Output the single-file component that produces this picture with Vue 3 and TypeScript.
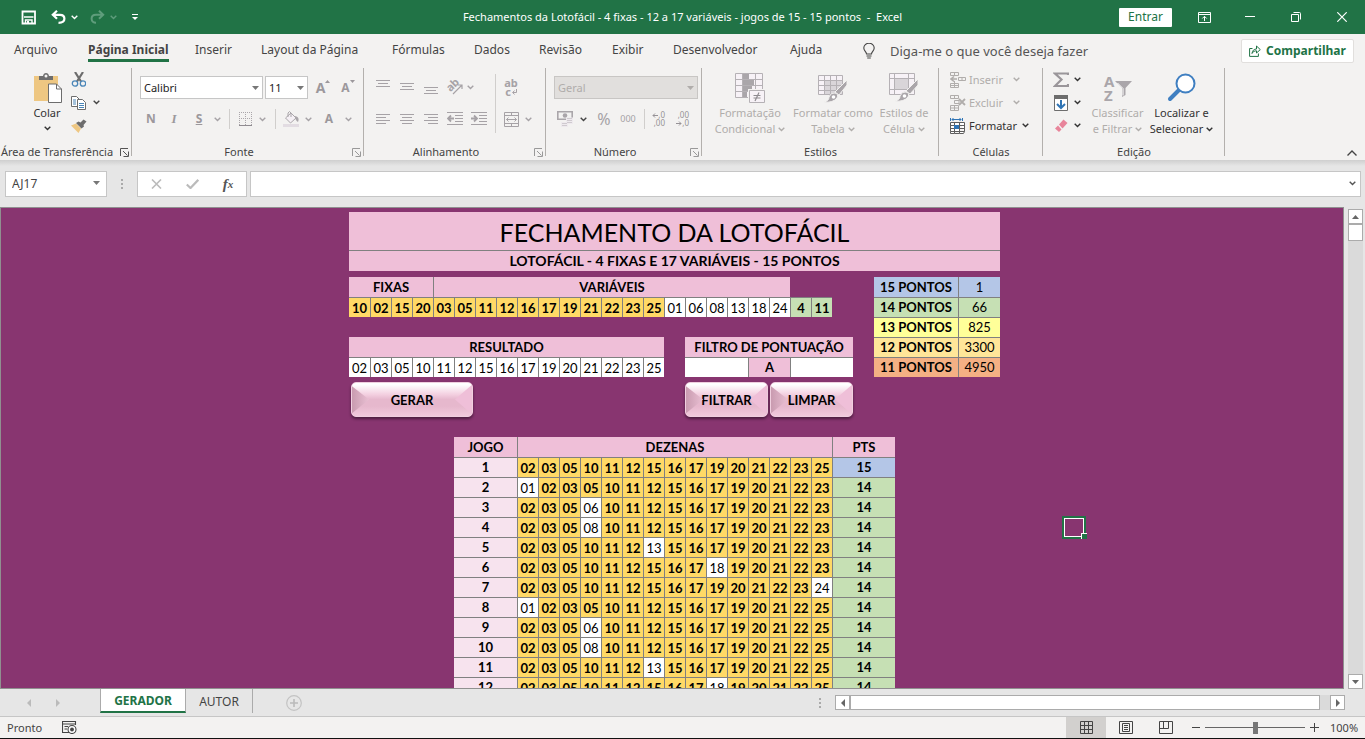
<script setup lang="ts">
import { ref, h, type FunctionalComponent } from 'vue'

const ribbonTabs = [
  'Arquivo',
  'Página Inicial',
  'Inserir',
  'Layout da Página',
  'Fórmulas',
  'Dados',
  'Revisão',
  'Exibir',
  'Desenvolvedor',
  'Ajuda',
]
const activeTab = ref('Página Inicial')

const fontName = ref('Calibri')
const fontSize = ref('11')
const numberFormat = ref('Geral')
const nameBox = ref('AJ17')
const formula = ref('')
const zoomLevel = ref(100)
const filterFrom = ref('')
const filterTo = ref('')

interface Dezena {
  n: string
  hit: boolean
}

const fixed = ['10', '02', '15', '20', '03', '05', '11', '12', '16', '17', '19', '21', '22', '23', '25']
const variable = ['01', '06', '08', '13', '18', '24']
const totals = ['4', '11']
const result = ['02', '03', '05', '10', '11', '12', '15', '16', '17', '19', '20', '21', '22', '23', '25']

const scores = [
  { label: '15 PONTOS', value: 1, tone: 'blue' },
  { label: '14 PONTOS', value: 66, tone: 'green' },
  { label: '13 PONTOS', value: 825, tone: 'yellow' },
  { label: '12 PONTOS', value: 3300, tone: 'amber' },
  { label: '11 PONTOS', value: 4950, tone: 'orange' },
]

// Each game swaps one drawn number for one of the losing variables.
function swap(removed: string, added: string): Dezena[] {
  return result
    .filter((n) => n !== removed)
    .concat(added)
    .sort()
    .map((n) => ({ n, hit: result.includes(n) }))
}

const games = [
  { dezenas: result.map((n): Dezena => ({ n, hit: true })), points: 15 },
  ...variable.map((v) => ({ dezenas: swap('25', v), points: 14 })),
  ...variable.map((v) => ({ dezenas: swap('23', v), points: 14 })),
]

const Chevron: FunctionalComponent = () =>
  h('svg', { width: 7, height: 5, viewBox: '0 0 7 5', class: 'chev', 'aria-hidden': 'true' }, [
    h('path', { d: 'M0.7 0.8L3.5 3.6L6.3 0.8', fill: 'none', stroke: 'currentColor', 'stroke-width': 1.4 }),
  ])

const Triangle: FunctionalComponent = () =>
  h('svg', { width: 7, height: 4, viewBox: '0 0 7 4', class: 'tri', 'aria-hidden': 'true' }, [
    h('path', { d: 'M0 0H7L3.5 4Z', fill: 'currentColor' }),
  ])

const Launcher: FunctionalComponent = () =>
  h('svg', { width: 9, height: 9, viewBox: '0 0 9 9', 'aria-hidden': 'true' }, [
    h('path', { d: 'M0.5 8V0.5H8M3 3L7.5 7.5M8.5 3.5V8.5H3.5', fill: 'none', stroke: 'currentColor' }),
  ])
</script>

<template>
  <div class="app">
    <header class="titlebar">
      <div class="quick">
        <button class="plain" aria-label="Salvar">
          <svg width="15" height="15" viewBox="0 0 15 15"><path d="M1.500 1.500H14V13.500H1.500Z" fill="none" stroke="#fff" stroke-width="1.800" /><path d="M3 7H12.500M4.500 13.500V10H11V13.500" fill="none" stroke="#fff" stroke-width="1.400" /><path d="M6 11H8V14H6Z" fill="#fff" /></svg>
        </button>
        <button class="plain" aria-label="Desfazer">
          <svg width="15" height="14" viewBox="0 0 15 14"><path d="M6 0.800L1.800 4.800L6 8.800M1.800 4.800H9C12 4.800 13.400 6.800 13.400 8.800C13.400 11.200 11.500 12.800 7.500 12.800" fill="none" stroke="#fff" stroke-width="2.200" /></svg>
        </button>
        <button class="plain" aria-label="Opções de desfazer"><Chevron /></button>
        <button class="plain faded" aria-label="Refazer" disabled>
          <svg width="15" height="14" viewBox="0 0 15 14"><path d="M9 0.800L13.200 4.800L9 8.800M13.200 4.800H6C3 4.800 1.600 6.800 1.600 8.800C1.600 11.200 3.500 12.800 6 12.800" fill="none" stroke="currentColor" stroke-width="2" /></svg>
        </button>
        <button class="plain faded" aria-label="Opções de refazer" disabled><Chevron /></button>
        <button class="plain" aria-label="Personalizar barra">
          <svg width="6" height="7" viewBox="0 0 6 7"><path d="M0 0.500H6" stroke="#fff" /><path d="M0 3H6L3 6Z" fill="#fff" /></svg>
        </button>
      </div>
      <h1 class="doc-title">Fechamentos da Lotofácil - 4 fixas - 12 a 17 variáveis - jogos de 15 - 15 pontos&nbsp; -&nbsp; Excel</h1>
      <div class="window-tools">
        <button class="signin">Entrar</button>
        <button class="win" aria-label="Opções de exibição da faixa">
          <svg width="13" height="11" viewBox="0 0 13 11"><path d="M0.500 0.500H12.500V10.500H0.500ZM0.500 2.500H12.500M6.500 9V4.500M4.300 6.500L6.500 4.300L8.700 6.500" fill="none" stroke="#fff" /></svg>
        </button>
        <button class="win" aria-label="Minimizar">
          <svg width="10" height="2" viewBox="0 0 10 2"><path d="M0 0.500H10" stroke="#fff" /></svg>
        </button>
        <button class="win" aria-label="Restaurar">
          <svg width="10" height="10" viewBox="0 0 10 10"><path d="M0.500 2.500H7.500V9.500H0.500ZM2.500 0.500H8.500Q9.500 0.500 9.500 1.500V7.500" fill="none" stroke="#fff" /></svg>
        </button>
        <button class="win" aria-label="Fechar">
          <svg width="10" height="10" viewBox="0 0 10 10"><path d="M0.300 0.300L9.700 9.700M9.700 0.300L0.300 9.700" stroke="#fff" stroke-width="1.200" /></svg>
        </button>
      </div>
    </header>

    <nav class="tabs" aria-label="Faixa de opções">
      <div class="tab-list">
        <button
          v-for="tab in ribbonTabs"
          :key="tab"
          class="tab"
          :class="{ active: tab === activeTab }"
          @click="activeTab = tab"
        >
          <span>{{ tab }}</span>
        </button>
      </div>
      <button class="tell-me">
        <svg width="12" height="16" viewBox="0 0 12 16"><path d="M3.500 11C3.500 8.500 0.800 8 0.800 5A5 4.600 0 0 1 11.200 5C11.200 8 8.500 8.500 8.500 11ZM3.500 13H8.500M4.200 15H7.800" fill="none" stroke="#444" stroke-width="1.100" /></svg>
        <span>Diga-me o que você deseja fazer</span>
      </button>
      <button class="share">
        <svg width="12" height="12" viewBox="0 0 12 12"><path d="M3.500 3.500H0.600V11.400H9.400V8.500M3 8.500C3.300 5.500 5 4 7.500 4V1L11.300 4.600L7.500 8V5.800C5.500 5.800 4 6.500 3 8.500Z" fill="none" stroke="#217346" /></svg>
        <span>Compartilhar</span>
      </button>
    </nav>

    <div class="ribbon">
      <section class="group g-clip">
        <div class="body clip-body">
          <button class="big on">
            <svg width="29" height="32" viewBox="0 0 29 32"><path d="M1 4H25V29H1Z" fill="#eec782" /><path d="M6 8V4H10Q10.500 1 13 1Q15.500 1 16 4H20V8Z" fill="#6d6d6d" /><circle cx="13" cy="4" r="1.500" fill="#f3f2f1" /><path d="M15.500 12H23.500L28.500 17V30.500H15.500Z" fill="#fff" stroke="#6d6d6d" /><path d="M23.500 12V17H28.500" fill="none" stroke="#6d6d6d" /></svg>
            <span>Colar</span>
            <Chevron />
          </button>
          <div class="stack">
            <button class="plain" aria-label="Recortar">
              <svg width="15" height="15" viewBox="0 0 15 15"><path d="M4 0L10 9.500M12 0L6 9.500" stroke="#6d6d6d" stroke-width="2.200" /><circle cx="4" cy="11.500" r="2.700" fill="none" stroke="#4a86b8" stroke-width="1.300" /><circle cx="12" cy="11.500" r="2.700" fill="none" stroke="#4a86b8" stroke-width="1.300" /></svg>
            </button>
            <div class="pair">
              <button class="plain" aria-label="Copiar">
                <svg width="15" height="14" viewBox="0 0 15 14"><path d="M0.500 0.500H5.500L8.500 3.500V10.500H0.500Z" fill="#fff" stroke="#6d6d6d" /><path d="M2 4H5M2 6H5M2 8H5" stroke="#4a86b8" /><path d="M6.500 3.500H11.500L14.500 6.500V13.500H6.500Z" fill="#fff" stroke="#6d6d6d" /><path d="M8 7.500H13M8 9.500H13M8 11.500H13" stroke="#4a86b8" /></svg>
              </button>
              <button class="plain" aria-label="Opções de cópia"><Chevron /></button>
            </div>
            <button class="plain" aria-label="Pincel de formatação">
              <svg width="16" height="14" viewBox="0 0 16 14"><path d="M0 6.500L5 4.500L10 9.500L7.500 14Z" fill="#eec782" /><path d="M5 4L7.500 2.500L9.500 3.500L12.500 0.500L15.500 2.500L12.500 6L13 7.500L10.500 9.500Z" fill="#6d6d6d" /></svg>
            </button>
          </div>
        </div>
        <footer><span>Área de Transferência</span><button class="plain dark" aria-label="Mais opções de área de transferência"><Launcher /></button></footer>
      </section>

      <section class="group g-font">
        <div class="body rows">
          <div class="row font-top">
            <label class="picker"><select v-model="fontName" aria-label="Fonte"><option>Calibri</option></select><Triangle /></label>
            <label class="picker"><select v-model="fontSize" aria-label="Tamanho da fonte"><option>11</option></select><Triangle /></label>
            <button class="plain glyph large" aria-label="Aumentar fonte">A<svg width="5" height="3" viewBox="0 0 5 3"><path d="M0 3L2.500 0L5 3Z" fill="currentColor" /></svg></button>
            <button class="plain glyph small" aria-label="Diminuir fonte">A<svg width="5" height="3" viewBox="0 0 5 3"><path d="M0 0L2.500 3L5 0Z" fill="currentColor" /></svg></button>
          </div>
          <div class="row font-bottom">
            <button class="plain glyph">N</button>
            <button class="plain glyph italic">I</button>
            <button class="plain glyph under">S</button>
            <button class="plain" aria-label="Opções de sublinhado"><Chevron /></button>
            <i class="rule"></i>
            <button class="plain" aria-label="Bordas">
              <svg width="13" height="14" viewBox="0 0 13 14"><path d="M0.500 0V13M6.500 0V13M12.500 0V13M0 0.500H13M0 6.500H13" stroke="#aaa6aa" stroke-dasharray="1 1" /><path d="M0 13.500H13" stroke="#8f8b90" /></svg>
            </button>
            <button class="plain" aria-label="Opções de bordas"><Chevron /></button>
            <i class="rule"></i>
            <button class="plain" aria-label="Cor de preenchimento">
              <svg width="16" height="16" viewBox="0 0 16 16"><path d="M2.500 7L8 2L13 7L7.500 12Z" fill="#f5f0f5" stroke="#aaa6aa" /><path d="M5 6V2Q6.500 -1 8 2V6" fill="none" stroke="#aaa6aa" /><path d="M12 5Q17 6 15 11Q12 9 12 5Z" fill="#aaa6aa" /><path d="M0 13H16V16H0Z" fill="#e2dce2" /></svg>
            </button>
            <button class="plain" aria-label="Opções de preenchimento"><Chevron /></button>
            <button class="plain glyph">A</button>
            <button class="plain" aria-label="Opções de cor da fonte"><Chevron /></button>
          </div>
        </div>
        <footer><span>Fonte</span><button class="plain" aria-label="Mais opções de fonte"><Launcher /></button></footer>
      </section>

      <section class="group g-align">
        <div class="body align-body">
          <div class="align-grid">
            <button class="plain" aria-label="Alinhar em cima"><svg width="14" height="14" viewBox="0 0 14 14"><path d="M0 0.500H14M2 3.500H12M0 6.500H14" stroke="currentColor" /></svg></button>
            <button class="plain" aria-label="Alinhar no meio"><svg width="14" height="14" viewBox="0 0 14 14"><path d="M0 3.500H14M2 6.500H12M0 9.500H14" stroke="currentColor" /></svg></button>
            <button class="plain" aria-label="Alinhar embaixo"><svg width="14" height="14" viewBox="0 0 14 14"><path d="M0 7.500H14M2 10.500H12M0 13.500H14" stroke="currentColor" /></svg></button>
            <button class="plain" aria-label="Orientação">
              <svg class="spill" width="16" height="16" viewBox="0 0 16 16"><g transform="rotate(-45 7 7)"><text x="0" y="9" font-size="11" font-weight="700" fill="currentColor">ab</text></g><path d="M6 15L15 6M11 6H15V10" fill="none" stroke="currentColor" stroke-width="1.200" /></svg>
            </button>
            <button class="plain start" aria-label="Opções de orientação"><Chevron /></button>
            <button class="plain" aria-label="Alinhar à esquerda"><svg width="14" height="12" viewBox="0 0 14 12"><path d="M0 1.500H14M0 4.500H10M0 7.500H14M0 10.500H10" stroke="currentColor" /></svg></button>
            <button class="plain" aria-label="Centralizar"><svg width="14" height="12" viewBox="0 0 14 12"><path d="M0 1.500H14M2 4.500H12M0 7.500H14M2 10.500H12" stroke="currentColor" /></svg></button>
            <button class="plain" aria-label="Alinhar à direita"><svg width="14" height="12" viewBox="0 0 14 12"><path d="M0 1.500H14M4 4.500H14M0 7.500H14M4 10.500H14" stroke="currentColor" /></svg></button>
            <button class="plain" aria-label="Diminuir recuo"><svg width="16" height="14" viewBox="0 0 16 14"><path d="M0 0.500H16M8 3.500H16M8 6.500H16M8 9.500H16M0 12.500H16" stroke="currentColor" /><path d="M1 6.500H7M4 3.500L1 6.500L4 9.500" fill="none" stroke="currentColor" stroke-width="1.800" /></svg></button>
            <button class="plain" aria-label="Aumentar recuo"><svg width="16" height="14" viewBox="0 0 16 14"><path d="M0 0.500H16M8 3.500H16M8 6.500H16M8 9.500H16M0 12.500H16" stroke="currentColor" /><path d="M0 6.500H6M3 3.500L6 6.500L3 9.500" fill="none" stroke="currentColor" stroke-width="1.800" /></svg></button>
          </div>
          <i class="rule tall"></i>
          <div class="wrap-grid">
            <button class="plain wrap-text" aria-label="Quebrar texto automaticamente"><span>ab</span><span>c<svg width="5" height="6" viewBox="0 0 5 6"><path d="M4.500 0V3.500H0.800M2.500 1.500L0.700 3.500L2.500 5.500" fill="none" stroke="currentColor" /></svg></span></button>
            <span></span>
            <button class="plain" aria-label="Mesclar e centralizar"><svg width="15" height="15" viewBox="0 0 15 15"><path d="M0.500 0.500H14.500V14.500H0.500ZM0.500 3.500H14.500M0.500 11.500H14.500M7.500 0.500V3.500M7.500 11.500V14.500M2.500 7.500H12.500M4.500 5.500L2.500 7.500L4.500 9.500M10.500 5.500L12.500 7.500L10.500 9.500" fill="none" stroke="currentColor" /></svg></button>
            <button class="plain" aria-label="Opções de mesclagem"><Chevron /></button>
          </div>
        </div>
        <footer><span>Alinhamento</span><button class="plain" aria-label="Mais opções de alinhamento"><Launcher /></button></footer>
      </section>

      <section class="group g-number">
        <div class="body rows">
          <div class="row">
            <label class="picker off"><select v-model="numberFormat" aria-label="Formato de número" disabled><option>Geral</option></select><Triangle /></label>
          </div>
          <div class="row number-bottom">
            <button class="plain" aria-label="Formato de contabilização">
              <svg width="16" height="16" viewBox="0 0 16 16"><path d="M0.800 0.800H15.200V8.200H0.800Z" fill="#f3f2f1" stroke="#aaa6aa" stroke-width="1.600" /><circle cx="8" cy="4.500" r="2.300" fill="#aaa6aa" /><path d="M9 6.500H16V13H11V16H4V11H9Z" fill="#eeeaee" /><path d="M10 7.500H15M10 9.500H15M10 11.500H15M5 12.500H10M5 14.500H10" stroke="#cfcacf" /></svg>
            </button>
            <button class="plain dark" aria-label="Opções de moeda"><Chevron /></button>
            <button class="plain percent">%</button>
            <button class="plain thousands">000</button>
            <i class="rule"></i>
            <button class="plain decimals" aria-label="Aumentar casas decimais"><span><svg width="6" height="5" viewBox="0 0 6 5"><path d="M6 2.500H1M3 0.500L1 2.500L3 4.500" fill="none" stroke="currentColor" /></svg>,0</span><span>,00</span></button>
            <button class="plain decimals" aria-label="Diminuir casas decimais"><span>,00</span><span><svg width="6" height="5" viewBox="0 0 6 5"><path d="M0 2.500H5M3 0.500L5 2.500L3 4.500" fill="none" stroke="currentColor" /></svg>,0</span></button>
          </div>
        </div>
        <footer><span>Número</span><button class="plain" aria-label="Mais opções de número"><Launcher /></button></footer>
      </section>

      <section class="group g-styles">
        <div class="body style-body">
          <button class="big" disabled>
            <svg width="30" height="30" viewBox="0 0 30 30"><path d="M0.500 0.500H27.500V24.500H0.500Z" fill="#f7f2f7" stroke="#b5b1b5" /><path d="M7.500 0V25M20.500 0V25M0 6.500H28M0 12.500H28M0 18.500H28" stroke="#b5b1b5" /><path d="M8 1H14V6H8ZM8 7H19V12H8ZM8 13H17V18H8ZM8 19H12V24H8Z" fill="#aaa6aa" /><path d="M13 16H30V30H13Z" fill="#f3f2f1" /><path d="M14.500 17.500H29.500V29.500H14.500Z" fill="#f7f2f7" stroke="#b5b1b5" /><path d="M18.500 22.500H25.500M18.500 25H25.500M24 19.500L20 28" stroke="#8f8b90" stroke-width="1.200" /></svg>
            <span>Formatação</span>
            <span>Condicional <Chevron /></span>
          </button>
          <button class="big" disabled>
            <svg width="30" height="30" viewBox="0 0 30 30"><path d="M0.500 2.500H24.500V21.500H0.500Z" fill="#f7f2f7" stroke="#b5b1b5" /><path d="M7 8H24V21H7Z" fill="#d9d5d9" /><path d="M6.500 2V22M12.500 2V22M18.500 2V22M0 7.500H25M0 12.500H25M0 17.500H25" stroke="#b5b1b5" /><path d="M29 7V12L21 22L17 19Z" fill="#aaa6aa" stroke="#f3f2f1" /><path d="M17 20Q21 21 19 25Q15 30 6 29Q11 28 11 24Q13 19 17 20Z" fill="#aaa6aa" stroke="#f3f2f1" /><circle cx="15.500" cy="24" r="1.800" fill="#fff" /></svg>
            <span>Formatar como</span>
            <span>Tabela <Chevron /></span>
          </button>
          <button class="big" disabled>
            <svg width="30" height="30" viewBox="0 0 30 30"><path d="M0.500 0.500H25.500V21.500H0.500Z" fill="#f7f2f7" stroke="#b5b1b5" /><path d="M5.500 0V22M0 5.500H26M19.500 0V22M0 16.500H26" stroke="#b5b1b5" /><path d="M6 6H19V16H6Z" fill="#d9d5d9" /><path d="M29 6V12L21 21L17 18Z" fill="#aaa6aa" stroke="#f3f2f1" /><path d="M17 19Q21 20 19 24Q15 29 6 28Q11 27 11 23Q13 18 17 19Z" fill="#aaa6aa" stroke="#f3f2f1" /><circle cx="15.500" cy="23" r="1.800" fill="#fff" /></svg>
            <span>Estilos de</span>
            <span>Célula <Chevron /></span>
          </button>
        </div>
        <footer class="full"><span>Estilos</span></footer>
      </section>

      <section class="group g-cells">
        <div class="body cell-body">
          <button class="line" disabled>
            <svg width="16" height="16" viewBox="0 0 16 16"><path d="M0.500 0.500H8.500V3.500H0.500ZM4.500 0.500V3.500M0.500 11.500H8.500V15.500H0.500ZM4.500 9V15.500M0.500 13.500H8.500M8.500 5.500H15.500V8.500H8.500ZM12 5.500V8.500" fill="none" stroke="currentColor" /><path d="M0.500 7H7M4 4.500L1 7L4 9.500" fill="none" stroke="currentColor" stroke-width="1.600" /></svg>
            <span>Inserir</span><Chevron />
          </button>
          <button class="line" disabled>
            <svg width="16" height="16" viewBox="0 0 16 16"><path d="M0.500 0.500H8.500V3.500H0.500ZM4.500 0.500V3.500M4.500 5.500H9V8.500H4.500ZM0.500 10.500H8.500V15.500H0.500ZM4.500 10.500V15.500M0.500 13H8.500" fill="none" stroke="currentColor" /><path d="M9 4L15 10M15 4L9 10" stroke="currentColor" stroke-width="1.800" /></svg>
            <span>Excluir</span><Chevron />
          </button>
          <button class="line on">
            <svg width="16" height="16" viewBox="0 0 16 16"><path d="M0.500 4.500H14.500V13.500H0.500ZM0.500 7.500H14.500M0.500 10.500H14.500M4.500 4.500V15.500H0.500V13.500M9.500 4.500V15.500H13.500L14.500 13.500M4.500 15.500H9.500" fill="#fff" stroke="#5e5e5e" /><path d="M4 7H9V11H4Z" fill="#2f74b5" /><path d="M0.500 0V3M12.500 0V3M2 1.500H11M3.500 0L2 1.500L3.500 3M9.500 0L11 1.500L9.500 3" fill="none" stroke="#2f74b5" /></svg>
            <span>Formatar</span><Chevron />
          </button>
        </div>
        <footer class="full"><span>Células</span></footer>
      </section>

      <section class="group g-edit">
        <div class="body edit-body">
          <div class="edit-stack">
            <button class="line on" aria-label="AutoSoma"><svg width="16" height="16" viewBox="0 0 16 16"><path d="M15 3V1.500H2L8.500 7.500L2 14H15V12" fill="none" stroke="#9a969a" stroke-width="2.200" /></svg><Chevron /></button>
            <button class="line on" aria-label="Preencher"><svg width="16" height="16" viewBox="0 0 16 16"><path d="M1.500 0.500H14.500V15.500H1.500Z" fill="#fff" stroke="#6d6d6d" /><path d="M1 0H15V4H1Z" fill="#6d6d6d" /><path d="M8 5V13M4 9L8 13L12 9" fill="none" stroke="#2f74b5" stroke-width="2" /></svg><Chevron /></button>
            <button class="line on" aria-label="Limpar"><svg width="16" height="16" viewBox="0 0 16 16"><path d="M6 6.500L10.500 1.500L14.500 5L9.500 10.500Z" fill="#e8849a" /><path d="M5 7.500L8.500 11.500L6 14L2 10.500Z" fill="#e8849a" /></svg><Chevron /></button>
          </div>
          <button class="big" disabled>
            <svg width="30" height="30" viewBox="0 0 30 30"><text x="1" y="14" font-size="15" font-weight="700" fill="#aaa6aa">A</text><text x="1" y="28" font-size="15" font-weight="700" fill="#aaa6aa">Z</text><path d="M12 8H29L22.500 15V22L19 24V15Z" fill="#aaa6aa" /><path d="M14.500 10L20 15.500V22.500" fill="none" stroke="#fff" /></svg>
            <span>Classificar</span>
            <span>e Filtrar <Chevron /></span>
          </button>
          <button class="big on">
            <svg width="30" height="30" viewBox="0 0 30 30"><path d="M12 17L3 26" stroke="#3f7fc1" stroke-width="4" stroke-linecap="round" /><circle cx="18.500" cy="10.500" r="9" fill="#fff" stroke="#3f7fc1" stroke-width="2" /></svg>
            <span>Localizar e</span>
            <span>Selecionar <Chevron /></span>
          </button>
        </div>
        <footer class="full"><span>Edição</span></footer>
      </section>

      <button class="plain collapse" aria-label="Recolher a faixa de opções">
        <svg width="10" height="6" viewBox="0 0 10 6"><path d="M0.500 5.500L5 1L9.500 5.500" fill="none" stroke="#444" stroke-width="1.400" /></svg>
      </button>
    </div>

    <div class="formula-bar">
      <label class="name-box"><input v-model="nameBox" aria-label="Caixa de nome" /><Triangle /></label>
      <i class="dots"></i>
      <div class="fx-box">
        <button class="plain" aria-label="Cancelar"><svg width="11" height="10" viewBox="0 0 11 10"><path d="M1 0.500L10 9.500M10 0.500L1 9.500" stroke="#bbb" stroke-width="1.600" /></svg></button>
        <button class="plain" aria-label="Inserir"><svg width="13" height="10" viewBox="0 0 13 10"><path d="M0.800 5.500L4.500 9L12.300 0.800" fill="none" stroke="#bbb" stroke-width="2.200" /></svg></button>
        <button class="plain fx" aria-label="Inserir função">f<sub>x</sub></button>
      </div>
      <label class="formula-input"><input v-model="formula" aria-label="Barra de fórmulas" /><Chevron /></label>
    </div>

    <div class="workspace">
      <main class="sheet">
        <div class="content">
          <header class="banner">
            <h2>FECHAMENTO DA LOTOFÁCIL</h2>
            <p>LOTOFÁCIL - 4 FIXAS E 17 VARIÁVEIS - 15 PONTOS</p>
          </header>

          <div class="panels">
            <table class="cells numbers">
              <colgroup><col v-for="i in 23" :key="i" /></colgroup>
              <thead><tr><th colspan="4">FIXAS</th><th colspan="17">VARIÁVEIS</th><td colspan="2" class="empty"></td></tr></thead>
              <tbody>
                <tr>
                  <td v-for="n in fixed" :key="n" class="low gold">{{ n }}</td>
                  <td v-for="n in variable" :key="n" class="low white">{{ n }}</td>
                  <td v-for="n in totals" :key="'t' + n" class="low green bold">{{ n }}</td>
                </tr>
              </tbody>
            </table>

            <table class="cells scores">
              <tbody>
                <tr v-for="s in scores" :key="s.label" :class="s.tone"><th>{{ s.label }}</th><td>{{ s.value }}</td></tr>
              </tbody>
            </table>

            <table class="cells result">
              <colgroup><col v-for="i in 15" :key="i" /></colgroup>
              <thead><tr><th colspan="15">RESULTADO</th></tr></thead>
              <tbody><tr><td v-for="n in result" :key="n" class="low white">{{ n }}</td></tr></tbody>
            </table>

            <table class="cells filter">
              <colgroup><col class="side" /><col /><col class="side" /></colgroup>
              <thead><tr><th colspan="3">FILTRO DE PONTUAÇÃO</th></tr></thead>
              <tbody>
                <tr>
                  <td class="white"><input v-model="filterFrom" aria-label="Pontuação mínima" /></td>
                  <th>A</th>
                  <td class="white"><input v-model="filterTo" aria-label="Pontuação máxima" /></td>
                </tr>
              </tbody>
            </table>

            <div class="actions first"><button class="bevel wide"><span>GERAR</span></button></div>
            <div class="actions second"><button class="bevel"><span>FILTRAR</span></button><button class="bevel"><span>LIMPAR</span></button></div>
          </div>

          <table class="cells games">
            <colgroup><col class="edge" /><col v-for="i in 15" :key="i" /><col class="edge" /></colgroup>
            <thead><tr><th>JOGO</th><th colspan="15">DEZENAS</th><th>PTS</th></tr></thead>
            <tbody>
              <tr v-for="(g, i) in games" :key="i">
                <th class="pale">{{ i + 1 }}</th>
                <td v-for="d in g.dezenas" :key="d.n" class="low" :class="d.hit ? 'gold' : 'white'">{{ d.n }}</td>
                <td class="bold" :class="g.points === 15 ? 'blue' : 'green'">{{ g.points }}</td>
              </tr>
            </tbody>
          </table>
        </div>
        <div class="selection"><i></i></div>
      </main>
      <div class="vscroll">
        <button class="arrow" aria-label="Rolar para cima"><svg width="7" height="4" viewBox="0 0 7 4"><path d="M0 4H7L3.500 0Z" fill="#666" /></svg></button>
        <i class="thumb"></i>
        <button class="arrow end" aria-label="Rolar para baixo"><svg width="7" height="4" viewBox="0 0 7 4"><path d="M0 0H7L3.500 4Z" fill="#666" /></svg></button>
      </div>
    </div>

    <div class="sheet-tabs">
      <div class="nav">
        <button class="plain" aria-label="Planilha anterior"><svg width="4" height="8" viewBox="0 0 4 8"><path d="M4 0V8L0 4Z" fill="#bbb" /></svg></button>
        <button class="plain" aria-label="Próxima planilha"><svg width="4" height="8" viewBox="0 0 4 8"><path d="M0 0V8L4 4Z" fill="#bbb" /></svg></button>
      </div>
      <button class="sheet-tab current">GERADOR</button>
      <button class="sheet-tab">AUTOR</button>
      <button class="plain add" aria-label="Nova planilha"><svg width="16" height="16" viewBox="0 0 16 16"><circle cx="8" cy="8" r="7.300" fill="none" stroke="#c3c3c3" stroke-width="1.200" /><path d="M8 4V12M4 8H12" stroke="#bbb" stroke-width="1.600" /></svg></button>
      <i class="dots"></i>
      <div class="hscroll">
        <button class="arrow" aria-label="Rolar para a esquerda"><svg width="4" height="8" viewBox="0 0 4 8"><path d="M4 0V8L0 4Z" fill="#666" /></svg></button>
        <i class="thumb"></i>
        <button class="arrow" aria-label="Rolar para a direita"><svg width="4" height="8" viewBox="0 0 4 8"><path d="M0 0V8L4 4Z" fill="#666" /></svg></button>
      </div>
    </div>

    <footer class="status">
      <span>Pronto</span>
      <button class="plain macro" aria-label="Gravar macro"><svg width="15" height="13" viewBox="0 0 15 13"><path d="M7 11.500H0.500V0.500H13.500V4M0.500 3H13.500M2.500 5.500H6M2.500 8H5" fill="none" stroke="#444" stroke-width="1.100" /><circle cx="10" cy="8.500" r="4" fill="#fff" stroke="#444" stroke-width="1.100" /><circle cx="10" cy="8.500" r="1.900" fill="#444" /></svg></button>
      <div class="views">
        <button class="view active" aria-label="Normal"><svg width="13" height="13" viewBox="0 0 13 13"><path d="M0.500 0.500H12.500V12.500H0.500ZM4.500 0V13M8.500 0V13M0 4.500H13M0 8.500H13" fill="none" stroke="#444" /></svg></button>
        <button class="view" aria-label="Layout da página"><svg width="14" height="13" viewBox="0 0 14 13"><path d="M0.500 0.500H13.500V12.500H0.500ZM3.500 2.500H10.500V10.500H3.500ZM5 4.500H9M5 6.500H9M5 8.500H9" fill="none" stroke="#444" /></svg></button>
        <button class="view" aria-label="Quebras de página"><svg width="14" height="13" viewBox="0 0 14 13"><path d="M0.500 0.500H13.500V12.500H0.500ZM4.500 0.500V7.500M9.500 0.500V7.500M0.500 7.500H9.500" fill="none" stroke="#444" /></svg></button>
      </div>
      <button class="plain" aria-label="Reduzir"><svg width="8" height="9" viewBox="0 0 8 9"><path d="M0 4.500H8" stroke="#444" /></svg></button>
      <input v-model="zoomLevel" class="zoom" type="range" min="0" max="200" aria-label="Zoom" />
      <button class="plain" aria-label="Ampliar"><svg width="9" height="9" viewBox="0 0 9 9"><path d="M0 4.500H9M4.500 0V9" stroke="#444" /></svg></button>
      <output>{{ zoomLevel }}%</output>
    </footer>
  </div>
</template>

<style>
body {
  margin: 0;
  overflow: hidden;
}
.chev,
.tri {
  flex: none;
}
</style>

<style scoped>
* {
  box-sizing: border-box;
}
.app {
  display: flex;
  flex-direction: column;
  height: 100vh;
  background: #e6e6e6;
  color: #444;
  font-family: 'Noto Sans', 'Open Sans', sans-serif;
  font-size: 11px;
  line-height: 16px;
  border-bottom: 1px solid #111;
}
button,
input,
select {
  font: inherit;
  color: inherit;
}
button {
  margin: 0;
  padding: 0;
  border: 0;
  background: none;
  white-space: nowrap;
}
svg {
  display: block;
  flex: none;
}
.spill {
  overflow: visible;
}
.plain {
  display: flex;
  align-items: center;
  justify-content: center;
}

/* Title bar */
.titlebar {
  display: grid;
  grid-template-columns: 1fr auto 1fr;
  align-items: center;
  height: 34px;
  flex: none;
  background: #217346;
  color: #fff;
}
.quick {
  display: grid;
  grid-template-columns: 30px 20px 19px 20px 22px 6px;
  justify-items: start;
  padding-left: 21px;
  align-items: center;
}
.quick .faded {
  color: #5f9d7c;
}
.doc-title {
  margin: 0;
  font-size: 11px;
  font-weight: 400;
  white-space: pre;
}
.window-tools {
  display: flex;
  justify-content: flex-end;
  align-items: center;
}
.signin {
  width: 53px;
  height: 19px;
  margin-right: 9px;
  background: #fff;
  color: #217346;
  border-radius: 1px;
  font-size: 12px;
}
.win {
  display: flex;
  align-items: center;
  justify-content: center;
  width: 46px;
  height: 34px;
}

/* Ribbon tabs */
.tabs {
  display: flex;
  align-items: center;
  height: 34px;
  flex: none;
  padding: 0 11px 0 14px;
  background: #f3f2f1;
}
.tab-list {
  display: grid;
  grid-template-columns: 74px 107px 66px 131px 82px 65px 73px 61px 117px 73px;
  height: 34px;
}
.tab {
  display: flex;
  font-size: 12px;
}
.tab span {
  height: 28px;
  line-height: 31px;
}
.tab.active {
  font-weight: 700;
}
.tab.active span {
  border-bottom: 3px solid #217346;
}
.tell-me {
  display: flex;
  align-items: center;
  gap: 15px;
  color: #555;
  font-size: 13px;
}
.share {
  display: flex;
  align-items: center;
  justify-content: center;
  gap: 5px;
  width: 113px;
  height: 24px;
  margin-left: auto;
  border: 1px solid #e1dfdd;
  border-radius: 2px;
  background: #fff;
  color: #217346;
  font-weight: 700;
  font-size: 12px;
}

/* Ribbon */
.ribbon {
  display: flex;
  flex: none;
  height: 92px;
  background: #f3f2f1;
  color: #444;
}
.group {
  position: relative;
  display: flex;
  flex-direction: column;
  flex: none;
}
.group::after {
  content: '';
  position: absolute;
  right: 0;
  top: 0;
  bottom: 4px;
  width: 1px;
  background: #b3b0ad;
}
.g-clip {
  width: 132px;
}
.g-font {
  width: 232px;
}
.g-align {
  width: 182px;
}
.g-number {
  width: 156px;
}
.g-styles {
  width: 237px;
}
.g-cells {
  width: 104px;
}
.g-edit {
  width: 182px;
}
.body {
  height: 76px;
  color: #a6a2a6;
}
.group footer {
  display: grid;
  grid-template-columns: 1fr 18px;
  height: 16px;
  align-items: center;
  text-align: center;
  white-space: nowrap;
}
.group footer .plain {
  color: #999;
  justify-content: start;
  padding-left: 6px;
}
.group footer .plain.dark {
  color: #555;
}
.group footer.full {
  grid-template-columns: 1fr;
}
.dark {
  color: #444;
}
.on {
  color: #333;
}
.big {
  display: flex;
  flex-direction: column;
  align-items: center;
  padding-top: 3px;
}
.big > svg:first-child {
  height: 34px;
}
.big span {
  display: flex;
  align-items: center;
  gap: 3px;
}
.big:disabled,
.line:disabled {
  color: #b0adab;
}
.clip-body {
  display: grid;
  grid-template-columns: 38px 1fr;
  column-gap: 5px;
  padding-left: 28px;
}
.clip-body .big > .chev {
  margin-top: 5px;
}
.stack {
  display: grid;
  grid-template-rows: repeat(3, 23px);
  justify-items: start;
  align-items: center;
}
.pair {
  display: flex;
  gap: 7px;
  color: #444;
}
.rows {
  display: grid;
  grid-template-rows: 23px 24px;
  row-gap: 8px;
  padding: 8px 8px 0;
}
.row {
  display: grid;
  align-items: center;
}
.font-top {
  grid-template-columns: 123px 43px 26px 20px;
  column-gap: 2px;
}
.font-bottom {
  grid-template-columns: 22px 24px 26px 10px 14px 18px 16px 10px 22px 12px 30px 8px;
}
.picker,
.name-box,
.formula-input {
  position: relative;
  display: block;
  color: #222;
}
.picker select {
  display: block;
  width: 100%;
  height: 23px;
  padding: 0 3px;
  border: 1px solid #c6c6c6;
  border-radius: 0;
  background: #fff;
  appearance: none;
}
.picker .tri {
  position: absolute;
  right: 4px;
  top: 10px;
  color: #777;
  pointer-events: none;
}
.picker.off select {
  background: #e1dfdd;
  border-color: #c8c6c4;
  color: #b0adab;
  opacity: 1;
}
.picker.off .tri {
  color: #b0adab;
}
.rule {
  justify-self: center;
  width: 1px;
  height: 20px;
  background: #d0cecc;
}
.glyph {
  font-weight: 700;
  font-size: 12px;
  color: #9c989c;
}
.glyph.large {
  font-size: 14px;
  align-items: flex-start;
}
.glyph.small {
  align-items: flex-start;
}
.italic {
  font-family: 'Liberation Serif', serif;
  font-style: italic;
  font-size: 13px;
}
.under {
  text-decoration: underline;
}
.align-body {
  display: flex;
  padding: 6px 0 0 7px;
}
.align-grid {
  display: grid;
  grid-template-columns: repeat(5, 24px);
  grid-template-rows: 26px 38px;
}
.align-grid .start {
  justify-content: start;
}
.rule.tall {
  height: 59px;
  margin: 0 4px;
}
.wrap-grid {
  display: grid;
  grid-template-columns: 22px 12px;
  grid-template-rows: 26px 38px;
}
.wrap-text {
  flex-direction: column;
  line-height: 9px;
  font-size: 11px;
  font-weight: 700;
  align-items: center;
}
.wrap-text span {
  display: flex;
  align-items: center;
  gap: 1px;
}
.number-bottom {
  grid-template-columns: 22px 14px 28px 20px 12px 16px 32px;
}
.percent {
  font-size: 16px;
}
.thousands {
  font-size: 9px;
}
.decimals {
  flex-direction: column;
  font-size: 8px;
  line-height: 8px;
  color: #969296;
}
.decimals span {
  display: flex;
  align-items: center;
  justify-content: flex-end;
  width: 14px;
}
.style-body {
  display: grid;
  grid-template-columns: 80px 86px 56px;
  padding-left: 8px;
}
.cell-body {
  display: grid;
  grid-template-rows: repeat(3, 23px);
  padding-left: 11px;
  justify-items: start;
}
.line {
  display: flex;
  align-items: center;
  gap: 3px;
}
.line .chev {
  margin-left: 2px;
}
.line:disabled .chev {
  margin-left: 7px;
}
.edit-body {
  display: grid;
  grid-template-columns: 36px 61px 67px;
  padding-left: 8px;
}
.edit-stack {
  display: grid;
  grid-template-rows: repeat(3, 23px);
  padding-left: 2px;
}
.collapse {
  margin: auto 8px 4px auto;
}

/* Formula bar */
.formula-bar {
  display: grid;
  grid-template-columns: 102px 30px 110px 1fr;
  align-items: center;
  flex: none;
  height: 47px;
  padding: 0 4px 0 5px;
  background: linear-gradient(#cfcfcf, #e6e6e6 6px);
}
.name-box input,
.formula-input input {
  display: block;
  width: 100%;
  height: 26px;
  padding: 0 6px;
  border: 1px solid #c6c6c6;
  background: #fff;
  outline: none;
}
.name-box input {
  font-size: 12px;
  color: #444;
}
.name-box .tri {
  position: absolute;
  right: 7px;
  top: 10px;
  color: #777;
}
.dots {
  justify-self: center;
  width: 2px;
  height: 10px;
  background: repeating-linear-gradient(#aaa 0 2px, transparent 2px 4px);
}
.fx-box {
  display: grid;
  grid-template-columns: repeat(3, 36px);
  height: 26px;
  border: 1px solid #c6c6c6;
  background: #fff;
}
.fx {
  font-family: 'Liberation Serif', serif;
  font-style: italic;
  font-weight: 700;
  font-size: 15px;
  color: #555;
}
.fx sub {
  font-size: 11px;
}
.formula-input {
  margin-left: 3px;
}
.formula-input .chev {
  position: absolute;
  right: 5px;
  top: 10px;
  color: #555;
}

/* Worksheet */
.workspace {
  display: grid;
  grid-template-columns: 1fr 21px;
  flex: 1;
  min-height: 0;
}
.sheet {
  position: relative;
  overflow: hidden;
  min-height: 0;
  padding: 4px 0 0 348px;
  border: 1px solid #909090;
  background: #883570;
  color: #000;
  font-family: 'Lato', 'Liberation Sans', sans-serif;
  font-size: 13px;
  line-height: 19px;
}
.content {
  width: 651px;
}
.banner {
  text-align: center;
  background: #efbfd8;
}
.banner h2 {
  margin: 0;
  padding-top: 2px;
  font-size: 25px;
  line-height: 36px;
  font-weight: 400;
}
.banner p {
  margin: 0;
  border-top: 1px solid #808080;
  font-size: 14px;
  line-height: 20px;
  font-weight: 700;
}
.panels {
  display: grid;
  grid-template-columns: 315px 168px 126px;
  grid-template-rows: 40px 40px 40px;
  column-gap: 21px;
  row-gap: 20px;
  margin-top: 6px;
}
.cells {
  table-layout: fixed;
  border-collapse: separate;
  border-spacing: 0;
  align-self: start;
}
.cells tr {
  height: 20px;
}
.cells th,
.cells td {
  height: 20px;
  padding: 0;
  border: 0 solid #808080;
  text-align: center;
  white-space: nowrap;
}
.cells th {
  font-weight: 700;
}
.cells .low {
  padding-top: 2px;
  line-height: 17px;
}
.cells thead th,
.filter th {
  background: #efbfd8;
}
.cells tr > * + * {
  border-left-width: 1px;
}
.cells tbody tr > *,
.scores tbody tr + tr > * {
  border-top-width: 1px;
}
.cells .empty {
  border-left-width: 0;
}
.cells .gold {
  background: #ffd966;
  font-weight: 700;
}
.cells .white {
  background: #fff;
}
.bold {
  font-weight: 700;
}
.green {
  background: #c6e0b4;
}
.blue {
  background: #b4c6e7;
}
.yellow {
  background: #ffff99;
}
.amber {
  background: #ffe699;
}
.orange {
  background: #f4b084;
}
.pale {
  background: #f7e3ee;
}
.numbers {
  grid-column: 1 / 3;
  width: 483px;
}
.scores {
  grid-column: 3;
  grid-row: 1 / 3;
  width: 126px;
}
.scores th {
  width: 84px;
}
.scores tbody tr:first-child > * {
  border-top-width: 0;
}
.result {
  width: 315px;
}
.filter {
  width: 168px;
}
.filter .side {
  width: 63px;
}
.filter input {
  display: block;
  width: 100%;
  height: 19px;
  padding: 0;
  border: 0;
  background: none;
  text-align: center;
  outline: none;
}
.actions {
  display: flex;
  gap: 2px;
  align-items: flex-start;
}
.actions.first {
  padding-left: 2px;
}
.panels .actions {
  margin-top: -15px;
}
.bevel {
  position: relative;
  flex: 1;
  height: 35px;
  padding: 2px 0 0;
  overflow: hidden;
  border: 1px solid #f0cfdf;
  border-radius: 5px;
  background: linear-gradient(#fff 5%, #f3cfe0 35%, #e6b8cd 50%, #e6b8cd 70%, #f1c9dc 100%);
  box-shadow: 0 2px 3px rgba(0, 0, 0, 0.45);
  font-weight: 700;
}
.bevel::before,
.bevel::after {
  content: '';
  position: absolute;
  top: 0;
  bottom: 0;
  width: 17px;
}
.bevel::before {
  left: 0;
  background: linear-gradient(to right, #c99bb0, #e9c0d3);
  clip-path: polygon(0 10%, 100% 50%, 0 92%);
}
.bevel::after {
  right: 0;
  background: #efbfd8;
  clip-path: polygon(100% 5%, 0 50%, 100% 95%);
}
.bevel.wide {
  flex: 0 0 122px;
}
.games {
  width: 441px;
  margin: 0 0 0 105px;
}
.games .edge {
  width: 63px;
}
.selection {
  position: absolute;
  left: 1061px;
  top: 308px;
  width: 24px;
  height: 23px;
  border: 2px solid #217346;
  outline: 1px solid #fff;
  outline-offset: -3px;
}
.selection i {
  position: absolute;
  right: -3px;
  bottom: -2px;
  width: 6px;
  height: 6px;
  background: #217346;
  border: solid #fff;
  border-width: 1px 0 0 1px;
}
.vscroll {
  display: flex;
  flex-direction: column;
  width: 15px;
  margin: 2px 0 0 4px;
  background: #dadada;
}
.arrow {
  display: flex;
  align-items: center;
  justify-content: center;
  flex: none;
  width: 15px;
  height: 15px;
  border: 1px solid #ababab;
  background: #fff;
}
.thumb {
  border: 1px solid #ababab;
  background: #fff;
}
.vscroll .thumb {
  height: 17px;
}
.vscroll .end {
  margin-top: auto;
}

/* Sheet tabs */
.sheet-tabs {
  display: flex;
  align-items: center;
  flex: none;
  height: 28px;
  padding-right: 20px;
  border-bottom: 1px solid #c6c6c6;
}
.nav {
  display: flex;
  gap: 25px;
  width: 100px;
  padding-left: 27px;
}
.sheet-tab {
  align-self: flex-start;
  width: 67px;
  height: 24px;
  padding-top: 2px;
  font-size: 12px;
  border-right: 1px solid #ababab;
}
.sheet-tab.current {
  width: 86px;
  border: 1px solid #ababab;
  border-width: 0 1px 2px;
  border-bottom-color: #217346;
  background: #fff;
  color: #217346;
  font-weight: 700;
}
.add {
  margin-left: 33px;
}
.sheet-tabs .dots {
  margin-left: auto;
}
.hscroll {
  display: flex;
  width: 510px;
  margin-left: 14px;
  background: #dadada;
}
.hscroll .thumb {
  flex: 1;
  margin-right: 10px;
}

/* Status bar */
.status {
  display: flex;
  align-items: center;
  flex: none;
  height: 21px;
  padding: 0 7px;
  background: #f3f2f1;
}
.macro {
  margin-left: 20px;
}
.views {
  display: flex;
  margin: 0 6px 0 auto;
}
.view {
  display: flex;
  align-items: center;
  justify-content: center;
  width: 40px;
  height: 21px;
}
.view.active {
  background: #d2d0ce;
}
.zoom {
  appearance: none;
  width: 100px;
  height: 12px;
  margin: 0 5px;
  background: linear-gradient(#666, #666) center / 100% 1px no-repeat;
}
.zoom::-webkit-slider-thumb {
  appearance: none;
  width: 5px;
  height: 12px;
  background: #777;
}
.status output {
  width: 28px;
  margin-left: 11px;
  text-align: right;
}
</style>
